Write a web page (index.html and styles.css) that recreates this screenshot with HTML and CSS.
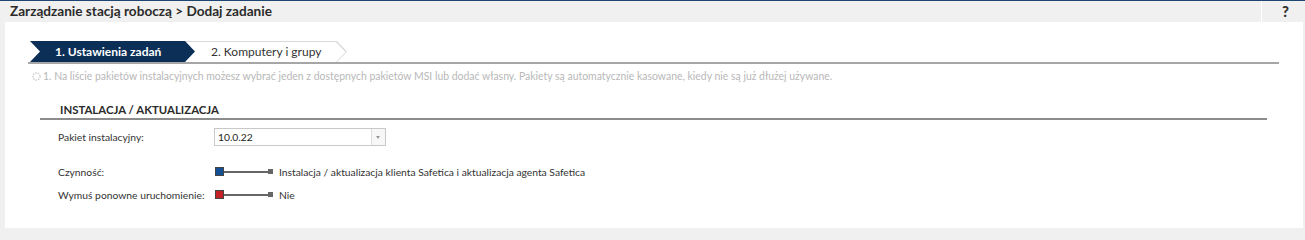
FILE: index.html
```html
<!DOCTYPE html>
<html lang="pl">
<head>
  <meta charset="UTF-8" />
  <title>Dodaj zadanie</title>
  <link rel="stylesheet" href="styles.css">
</head>
<body>
  <div class="topbar">
    <h1>Zarządzanie stacją roboczą &gt; Dodaj zadanie</h1>
    <div class="help">?</div>
  </div>

  <div class="panel">
    <!-- kroki kreatora -->
    <div class="steps">
      <div class="step step-active">1. Ustawienia zadań</div>
      <div class="step step-next"><span>2. Komputery i grupy</span></div>
    </div>

    <p class="hint">
      <svg class="hint-icon" width="9" height="9" viewBox="0 0 10 10">
        <circle cx="5" cy="5" r="4" fill="none" stroke="#c4c4c4" stroke-width="1.3" stroke-dasharray="1.6 1.2"/>
      </svg>
      1. Na liście pakietów instalacyjnych możesz wybrać jeden z dostępnych pakietów MSI lub dodać własny. Pakiety są automatycznie kasowane, kiedy nie są już dłużej używane.
    </p>

    <div class="section">
      <h2>INSTALACJA / AKTUALIZACJA</h2>

      <div class="row row-select">
        <label>Pakiet instalacyjny:</label>
        <div class="select">
          <span>10.0.22</span>
          <div class="select-arrow"></div>
        </div>
      </div>

      <div class="row">
        <label>Czynność:</label>
        <div class="switch">
          <span class="knob knob-blue"></span>
          <span class="track"></span>
          <span class="end"></span>
        </div>
        <span class="value">Instalacja / aktualizacja klienta Safetica i aktualizacja agenta Safetica</span>
      </div>

      <div class="row">
        <label>Wymuś ponowne uruchomienie:</label>
        <div class="switch">
          <span class="knob knob-red"></span>
          <span class="track"></span>
          <span class="end"></span>
        </div>
        <span class="value">Nie</span>
      </div>
    </div>
  </div>
</body>
</html>
```

FILE: styles.css
```css
* {
  margin: 0;
  padding: 0;
  box-sizing: border-box;
}

body {
  font-family: Lato, "Open Sans", sans-serif;
  background-color: #f0f0f0;
  color: #333;
  height: 240px;
  overflow: hidden;
}

.topbar {
  display: flex;
  height: 22px;
  border-top: 1px solid #1d4670;
  background-color: #f0f0f0;
}

.topbar h1 {
  flex-grow: 1;
  font-size: 13.6px;
  font-weight: bold;
  line-height: 20px;
  padding-left: 10px;
  color: #2b2b2b;
}

.help {
  width: 44px;
  border-left: 1px solid #fff;
  font-size: 15px;
  font-weight: 900;
  line-height: 20px;
  padding-left: 20px;
  color: #333;
}

.panel {
  background-color: #fff;
  margin: 0 2px 0 5px;
  height: 206px;
  padding-top: 19px;
}

/* Steps */
.steps {
  display: flex;
  margin-left: 23px;
  width: 1251px;
  padding-left: 2px;
  border-bottom: 2px solid #a6a6a6;
}

.step {
  height: 21px;
  font-size: 12px;
  line-height: 21px;
}

.step-active {
  position: relative;
  z-index: 2;
  width: 165px;
  padding-left: 25px;
  background-color: #0c2f57;
  color: #fff;
  font-weight: bold;
  clip-path: polygon(0 0, 155px 0, 165px 50%, 155px 100%, 0 100%, 10px 50%);
}

.step-next {
  width: 162px;
  margin-left: -10px;
  background-color: #d9d9d9;
  clip-path: polygon(0 0, 152px 0, 162px 50%, 152px 100%, 0 100%);
}

.step-next span {
  display: block;
  height: 20px;
  margin-top: 1px;
  padding-left: 26px;
  line-height: 19px;
  background-color: #fff;
  color: #333;
  clip-path: polygon(0 0, 151px 0, 160.5px 50%, 151px 100%, 0 100%);
}

.hint {
  display: flex;
  align-items: center;
  gap: 2px;
  margin: 5px 0 0 27px;
  font-size: 10.45px;
  line-height: 14px;
  color: #b8b8b8;
  white-space: nowrap;
}

/* Section */
.section {
  margin: 19px 0 0 35px;
  width: 1227px;
}

.section h2 {
  font-size: 11.4px;
  font-weight: bold;
  line-height: 16px;
  padding-left: 20px;
  border-bottom: 2px solid #8c8c8c;
  color: #2b2b2b;
}

.row {
  display: flex;
  align-items: center;
  height: 23px;
  padding-left: 18px;
  font-size: 10.3px;
  white-space: nowrap;
}

.row label {
  width: 156px;
  color: #333;
}

.row-select {
  height: 18px;
  margin-top: 8px;
  margin-bottom: 14px;
}

.select {
  display: flex;
  width: 172px;
  height: 18px;
  border: 1px solid #c9c9c9;
  align-items: center;
}

.select span {
  flex-grow: 1;
  padding-left: 3px;
  color: #222;
}

.select-arrow {
  width: 14px;
  height: 16px;
  border-left: 1px solid #ddd;
  background-color: #f7f7f7;
  position: relative;
}

.select-arrow::after {
  content: "";
  position: absolute;
  left: 4px;
  top: 7px;
  border-left: 2.5px solid transparent;
  border-right: 2.5px solid transparent;
  border-top: 3px solid #999;
}

/* Switch */
.switch {
  display: flex;
  align-items: center;
  width: 58px;
  margin-left: 1px;
  margin-right: 6px;
}

.knob {
  width: 9px;
  height: 9px;
  border: 1px solid #444;
}

.knob-blue {
  background-color: #134f92;
}

.knob-red {
  background-color: #c42127;
}

.track {
  flex-grow: 1;
  height: 2px;
  background-color: #666;
}

.end {
  width: 5px;
  height: 5px;
  background-color: #666;
}

.value {
  color: #333;
}
```
